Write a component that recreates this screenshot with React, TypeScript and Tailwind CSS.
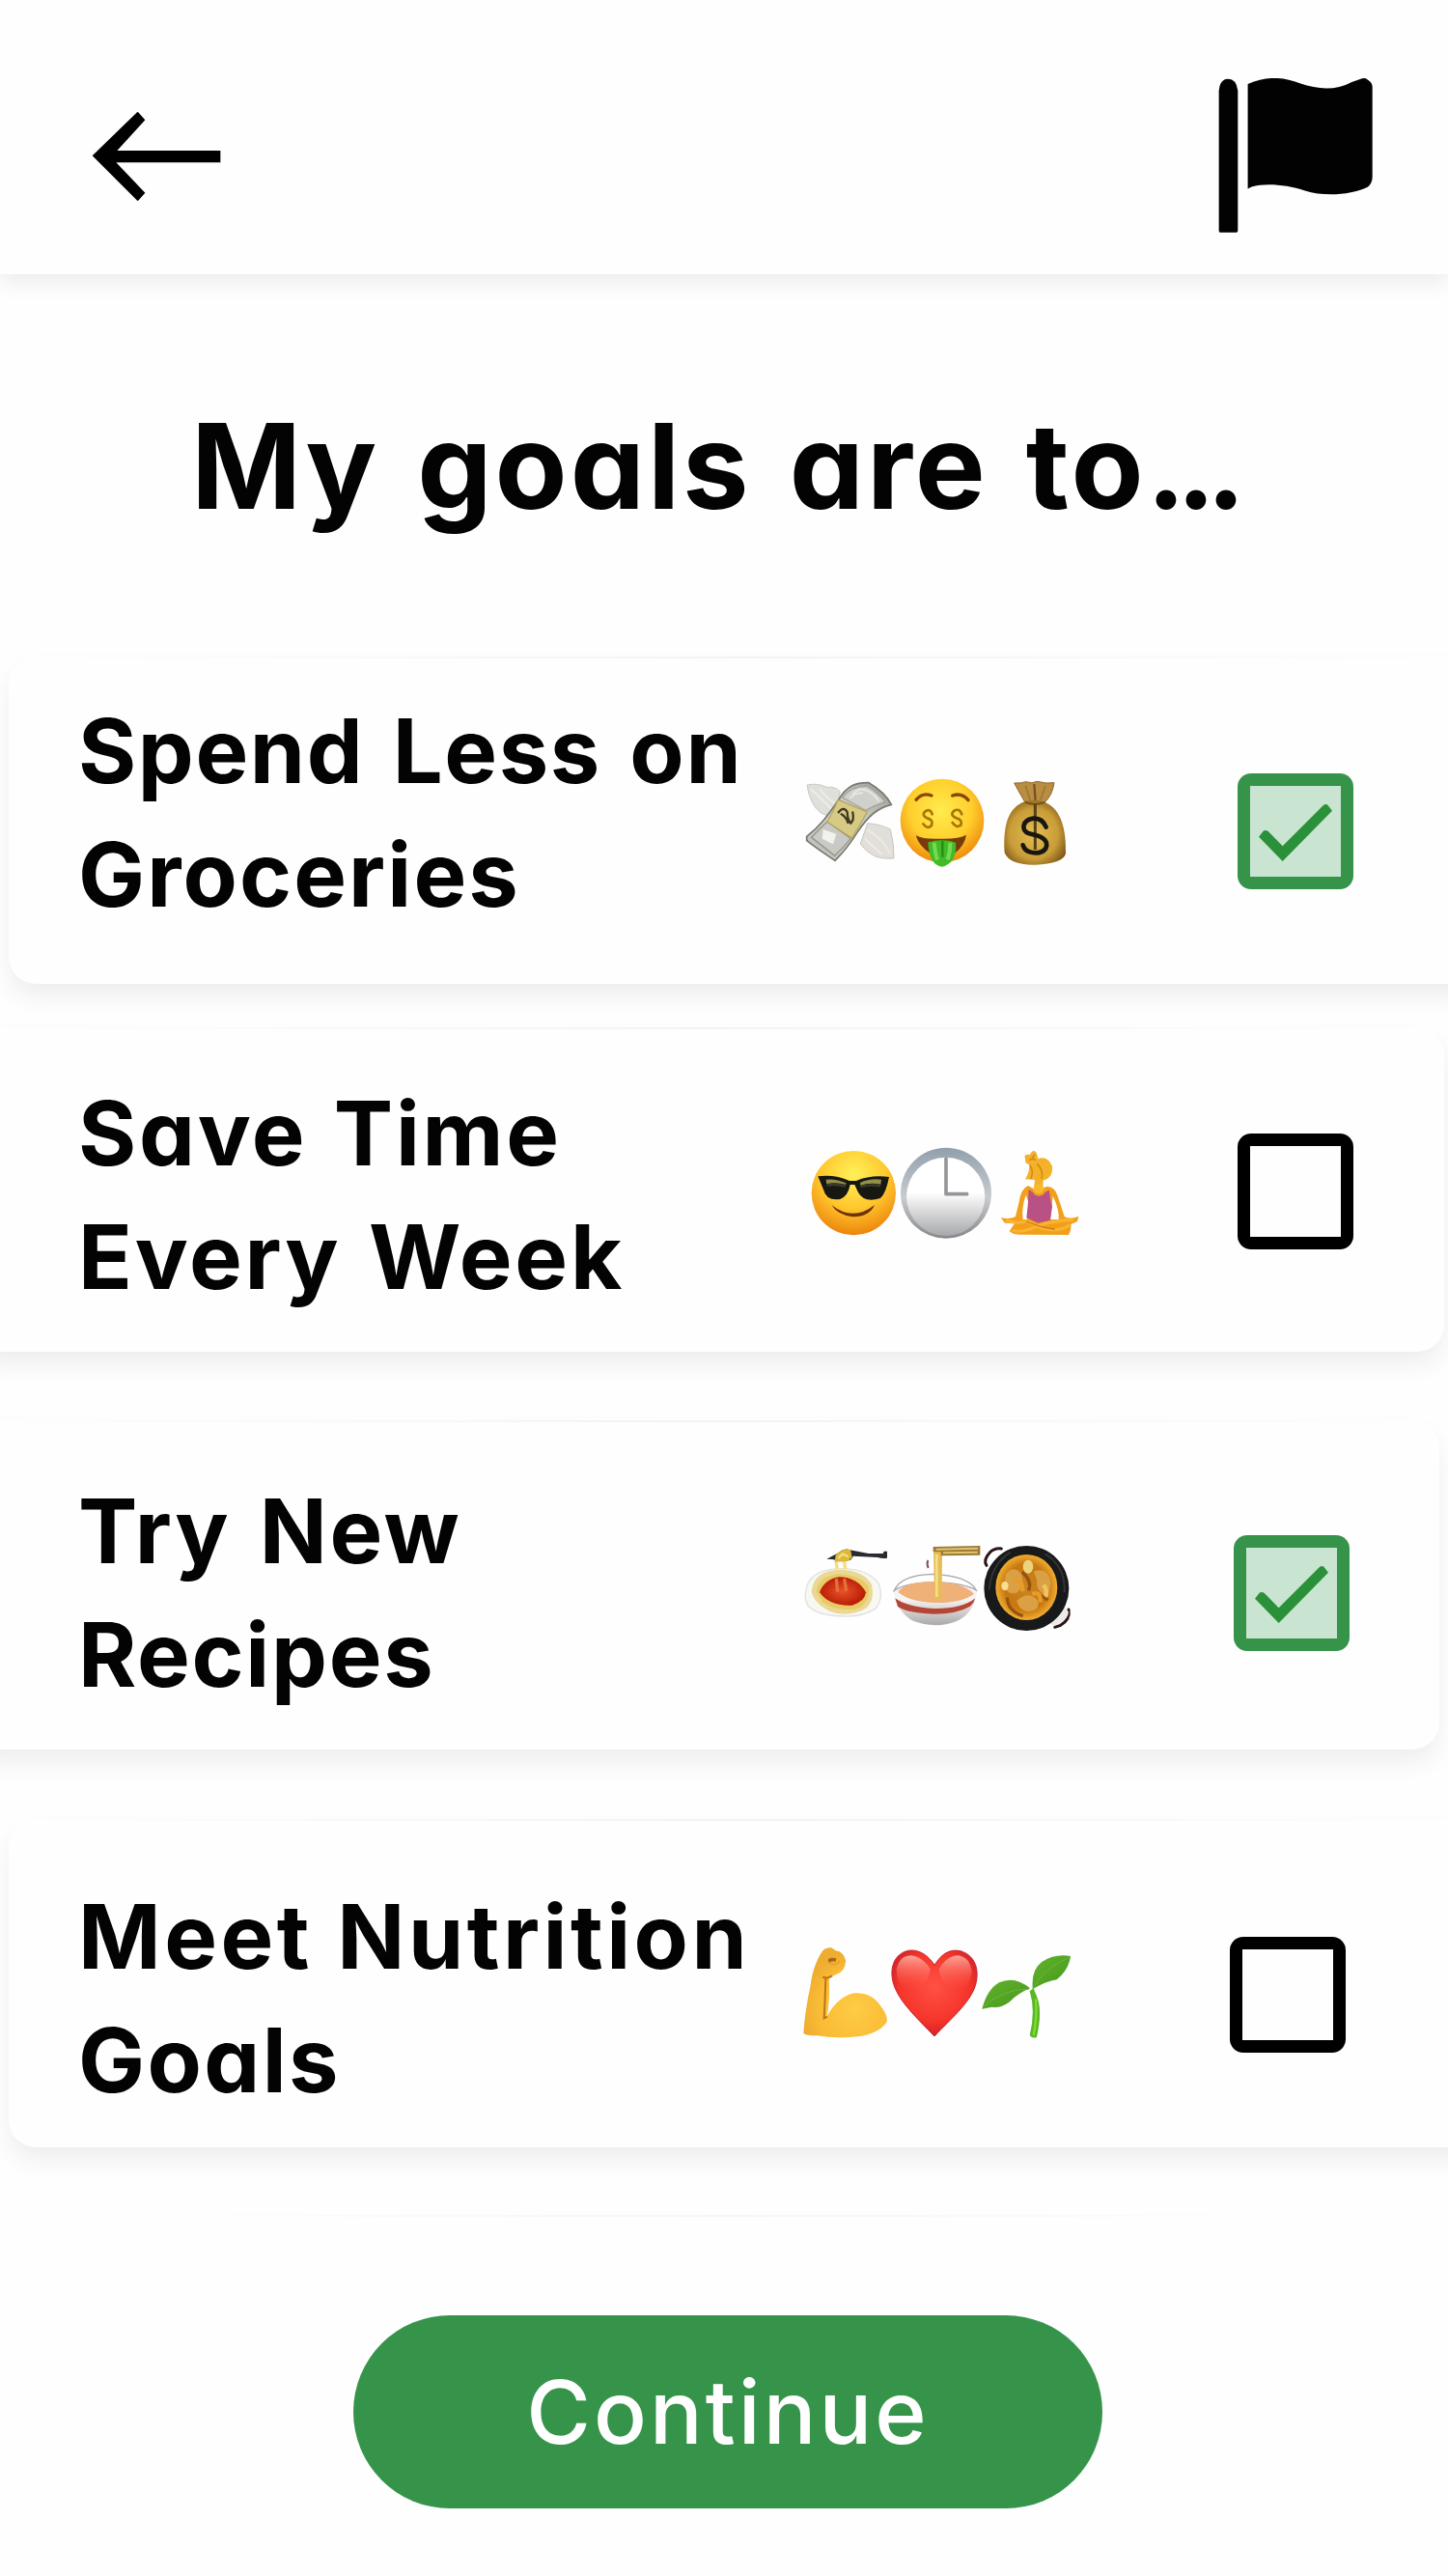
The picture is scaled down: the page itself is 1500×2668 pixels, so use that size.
import { useState, type ReactNode } from 'react'

type Goal = {
  id: string
  lines: { text: string; className: string }[]
  art: ReactNode
  checked: boolean
  card: string
  textClass: string
  artClass: string
  boxClass: string
}

function BackArrow() {
  return (
    <svg viewBox="0 0 402 282" className="h-[94px] w-[134px]" fill="#000">
      <path d="M2 139 L141 4 Q144 2 146 5 L166 28 L79 123 H400 V160 H76 L166 254 L146 277 Q143 281 140 277Z" />
    </svg>
  )
}

function FlagIcon() {
  return (
    <svg viewBox="0 0 484 484" className="h-[161px] w-[161px]" fill="#020202">
      <path d="M2 40 Q5 2 31 2 Q56 2 61 38 V474 Q61 480 56 480 H6 Q2 480 2 475Z" />
      <path d="M92 18 C154-8 202-4 254 16 C315 37 366 38 416 12 L448 1 Q458-2 464 4 Q480 14 480 27 V307 Q480 329 465 339 C414 364 330 369 270 350 C212 330 143 326 104 338 L92 344Z" />
    </svg>
  )
}

function MoneyArt() {
  return (
    <svg viewBox="0 0 930 420" className="h-[140px] w-[310px]">
      <defs>
        <radialGradient id="money-face" cx="48%" cy="38%" r="62%">
          <stop offset="0" stopColor="#ffec4e" />
          <stop offset=".6" stopColor="#ffcf2d" />
          <stop offset="1" stopColor="#ee8b0c" />
        </radialGradient>
        <radialGradient id="sack" cx="48%" cy="52%" r="60%">
          <stop offset="0" stopColor="#e3bd51" />
          <stop offset=".65" stopColor="#c99d38" />
          <stop offset="1" stopColor="#7d5618" />
        </radialGradient>
        <linearGradient id="bill" x1="0" y1="1" x2="1" y2="0">
          <stop offset="0" stopColor="#b7b8b1" />
          <stop offset=".5" stopColor="#d9d9d2" />
          <stop offset="1" stopColor="#94958d" />
        </linearGradient>
      </defs>
      <path d="M48 99 Q80 92 110 106 Q137 103 151 120 L134 193 Q108 197 90 185 Q57 160 48 99Z" fill="#dfe0db" stroke="#c8cac4" strokeWidth="3" />
      <path d="M60 112 Q88 137 130 180 M88 112 Q108 140 138 158" fill="none" stroke="#ecece8" strokeWidth="6" />
      <path d="M236 218 Q276 221 307 237 Q319 282 318 327 Q284 329 263 322 Q232 308 214 282Z" fill="#e2dfda" stroke="#c9c6c0" strokeWidth="3" />
      <path d="M236 239 Q278 260 308 314 M228 266 Q254 289 281 315" fill="none" stroke="#edeae5" strokeWidth="6" />
      <path d="M47 259 C86 229 110 198 147 144 C172 101 201 91 240 92 Q291 122 310 160 C267 171 239 194 205 245 Q175 294 135 334 Q82 299 47 272Z" fill="url(#bill)" stroke="#77786f" strokeWidth="5" />
      <path d="M62 262 Q92 230 111 213 L184 265 Q162 293 134 319Z" fill="#c9cac5" stroke="#92938b" strokeWidth="4" />
      <path d="M98 237 l41 14 l-10 32 l-34-17z" fill="#f2f2ed" />
      <path d="M158 138 Q184 102 235 103 Q270 124 290 151 Q260 161 230 178Z" fill="#d0d1cc" stroke="#a4a59e" strokeWidth="4" />
      <path d="M190 128 Q210 105 232 116 Q262 130 271 150 M181 141 Q196 122 222 124" fill="none" stroke="#e6e6e2" strokeWidth="6" />
      <path d="M145 145 L235 183 Q214 222 187 264 L110 213 Q130 182 145 145Z" fill="#d7ca85" stroke="#b4a65d" strokeWidth="4" />
      <path d="M146 184 Q162 164 173 183 Q174 207 184 218 Q195 209 190 184 M155 190 Q170 199 175 216" fill="none" stroke="#3f3927" strokeWidth="7" strokeLinecap="round" />

      <circle cx="468" cy="210" r="130" fill="url(#money-face)" />
      <path d="M387 145 Q407 121 435 132 M500 132 Q529 122 549 146" fill="none" stroke="#8a4706" strokeWidth="10" strokeLinecap="round" />
      <path d="M437 190 Q430 169 413 183 Q405 195 421 202 Q442 207 435 225 Q422 238 409 220 M529 190 Q522 169 504 180 Q491 193 512 202 Q532 207 526 224 Q512 234 500 216" fill="none" stroke="#a87507" strokeWidth="8" strokeLinecap="round" />
      <path d="M386 256 Q410 269 465 266 Q522 267 543 254 Q538 287 507 311 H430 Q396 289 386 256Z" fill="#773c09" />
      <path d="M424 277 Q470 264 510 278 Q514 329 485 346 Q468 360 449 346 Q427 331 424 277Z" fill="#42bb25" />
      <path d="M443 278 Q447 315 453 332 M493 278 Q493 308 485 331" fill="none" stroke="#74d957" strokeWidth="12" />
      <path d="M469 272 V323" stroke="#238b19" strokeWidth="7" />

      <path d="M692 93 Q715 94 728 89 Q747 96 764 88 Q789 96 816 92 Q811 129 787 153 Q756 160 724 150 Q706 119 692 93Z" fill="#b98d42" stroke="#8d6529" strokeWidth="3" />
      <path d="M754 96 L758 151" stroke="#795421" strokeWidth="7" />
      <path d="M727 101 L742 148 M789 102 L773 148" stroke="#a27a38" strokeWidth="6" />
      <path d="M724 151 Q757 140 787 153 C843 174 854 250 852 313 Q842 344 757 347 Q679 349 662 310 C657 224 673 170 724 151Z" fill="url(#sack)" />
      <path d="M725 152 Q755 165 787 152" fill="none" stroke="#6f4b17" strokeWidth="5" />
      <path d="M757 157 V300" stroke="#564018" strokeWidth="9" />
      <path d="M791 230 Q779 201 751 203 C720 207 709 239 738 250 C775 258 802 269 790 296 C776 317 727 315 719 286" fill="none" stroke="#171611" strokeWidth="14" strokeLinecap="round" />
    </svg>
  )
}

function TimeArt() {
  return (
    <svg viewBox="0 0 930 420" className="h-[140px] w-[310px]">
      <defs>
        <radialGradient id="cool-face" cx="50%" cy="28%" r="73%">
          <stop offset="0" stopColor="#fff158" />
          <stop offset=".55" stopColor="#ffc72d" />
          <stop offset="1" stopColor="#ec820c" />
        </radialGradient>
        <linearGradient id="clock-rim" x2="0" y2="1">
          <stop offset="0" stopColor="#91a0ad" />
          <stop offset=".55" stopColor="#c9cbcf" />
          <stop offset="1" stopColor="#85888b" />
        </linearGradient>
        <linearGradient id="clock-face" x2="0" y2="1">
          <stop offset=".45" stopColor="#fff" />
          <stop offset="1" stopColor="#a7a8aa" />
        </linearGradient>
      </defs>
      <circle cx="193" cy="197" r="131" fill="url(#cool-face)" />
      <path d="M82 145 Q136 139 180 159 H201 Q246 140 303 147 Q293 199 276 213 Q226 229 207 195 L196 171 H182 Q176 206 151 216 Q107 222 99 186Z" fill="#171812" />
      <path d="M107 155 Q137 151 169 166 V171 Q137 162 109 169Z M213 165 Q242 151 279 155 L277 170 Q240 163 214 174Z" fill="#91904b" />
      <path d="M109 173 Q139 167 167 176 M214 177 Q247 169 276 175" fill="none" stroke="#373b2a" strokeWidth="8" />
      <path d="M124 234 Q191 287 258 234 Q243 270 191 271 Q144 266 124 234Z" fill="#6d3105" />

      <circle cx="480" cy="197" r="141" fill="url(#clock-rim)" />
      <circle cx="479" cy="208" r="122" fill="url(#clock-face)" />
      <path d="M480 90 V200 H545" fill="none" stroke="#96969a" strokeWidth="11" strokeLinecap="round" strokeLinejoin="round" />

      <path d="M726 91 Q720 75 740 78 Q751 58 761 72 L766 90 Q797 80 810 114 Q813 150 782 158 L781 181 H753 L756 156 L726 154 Q742 128 738 108 Q725 108 726 91Z" fill="#f4b22b" />
      <path d="M739 96 Q748 86 758 95 M741 111 Q754 130 743 153 M763 106 Q784 128 777 153 M758 78 Q748 82 749 92" fill="none" stroke="#d88b13" strokeWidth="5" />
      <path d="M735 174 Q712 183 706 228 L696 270 Q677 280 650 273 L663 290 L693 292 L677 315 Q690 329 724 326 L861 327 Q870 312 868 294 L888 285 L892 269 Q865 280 848 270 L827 206 Q818 175 791 177 L766 191Z" fill="#f2a01c" />
      <path d="M728 203 Q714 245 719 279 H732 L736 224Z M812 206 Q833 250 830 279 H804Z" fill="#fff" />
      <path d="M737 187 Q749 190 754 201 Q768 211 783 201 Q790 190 801 189 Q802 213 810 239 L804 281 L767 290 L730 274 L734 238Z" fill="#b95184" />
      <ellipse cx="768" cy="184" rx="16" ry="15" fill="#f9b92e" />
      <path d="M666 282 Q705 294 729 284 L778 307 Q835 319 864 296 M876 280 Q807 283 765 300 Q720 320 686 314" fill="none" stroke="#f9b430" strokeWidth="9" />
      <path d="M729 285 Q778 306 818 309" fill="none" stroke="#ce7411" strokeWidth="4" />
    </svg>
  )
}

function RecipeArt() {
  return (
    <svg viewBox="0 0 930 420" className="h-[140px] w-[310px]">
      <defs>
        <radialGradient id="sauce">
          <stop offset="0" stopColor="#e7532a" />
          <stop offset="1" stopColor="#b91d04" />
        </radialGradient>
        <linearGradient id="soup-bowl" x2="0" y2="1">
          <stop offset=".5" stopColor="#f6f4f2" />
          <stop offset="1" stopColor="#aaa8a8" />
        </linearGradient>
        <radialGradient id="stew">
          <stop offset="0" stopColor="#c98522" />
          <stop offset=".7" stopColor="#c77710" />
          <stop offset="1" stopColor="#f1ad31" />
        </radialGradient>
      </defs>
      <path d="M45 200 Q54 139 145 134 Q237 132 271 181 Q287 225 263 257 Q222 284 166 282 Q83 282 51 250 Q38 224 45 200Z" fill="#f8f8f3" stroke="#dfe2e0" strokeWidth="4" />
      <path d="M62 205 Q67 142 145 137 Q224 137 249 184 Q261 245 219 264 Q164 285 118 266 Q69 242 62 205Z" fill="#ead995" />
      <path d="M77 206 Q80 160 145 151 Q215 154 239 190 Q244 237 208 257 Q144 270 97 239Z" fill="#e8ca66" />
      <path d="M87 207 Q104 166 147 160 Q206 161 231 208 Q227 237 188 248 Q116 251 87 207Z" fill="url(#sauce)" />
      <path d="M138 111 L142 136 M163 106 L167 136" fill="none" stroke="#f5dd83" strokeWidth="10" />
      <path d="M139 165 L143 206 M164 165 L170 203" fill="none" stroke="#e3713c" strokeWidth="10" />
      <path d="M109 104 L147 84 Q163 69 181 76 L239 87 L284 87 L287 80 H297 V101 Q280 103 268 99 L192 95 L183 107 L159 112 L126 105Z" fill="#292b31" />
      <path d="M137 91 L160 75 L183 74 L188 98 L176 111 L134 113Z" fill="#ddb73a" />
      <path d="M145 102 L159 88 L176 97" fill="none" stroke="#f5df84" strokeWidth="7" />

      <path d="M424 108 Q419 119 425 132" fill="none" stroke="#815457" strokeWidth="6" />
      <path d="M317 202 Q326 161 429 149 Q559 154 576 203 Q573 267 512 298 Q444 323 374 295 Q322 262 317 202Z" fill="url(#soup-bowl)" />
      <path d="M319 202 Q340 153 440 151 Q551 157 574 201 Q540 180 448 176 Q354 178 319 202Z" fill="#fff" stroke="#aaa4ac" strokeWidth="4" />
      <path d="M331 207 Q348 176 443 174 Q531 176 567 212 Q532 240 449 240 Q368 238 331 207Z" fill="#efb178" />
      <path d="M322 226 Q360 254 443 258 Q531 259 571 226 Q567 240 555 251 Q514 275 441 275 Q359 272 330 252Z" fill="#b54536" />
      <path d="M441 78 H468 L467 224 Q455 236 444 224Z" fill="#e6bd57" />
      <path d="M451 90 V222" stroke="#f6dd89" strokeWidth="8" />
      <path d="M440 66 L586 63 V92 L464 94 V82 H440Z" fill="#9e7833" />
      <path d="M449 74 L579 71 M471 85 L578 83" stroke="#ddc573" strokeWidth="6" />

      <path d="M606 124 Q594 108 616 84 Q631 69 652 72 M861 261 Q867 291 836 310 L818 316" fill="none" stroke="#29151a" strokeWidth="9" strokeLinecap="round" />
      <path d="M844 246 L861 269 Q857 299 813 310 L799 302Z" fill="#edebe7" />
      <ellipse cx="730" cy="195" rx="132" ry="132" fill="#18191a" />
      <path d="M614 200 Q621 120 680 83 M788 88 Q852 128 848 207" fill="none" stroke="#333332" strokeWidth="6" />
      <ellipse cx="730" cy="192" rx="96" ry="102" fill="url(#stew)" />
      <path d="M666 151 Q690 121 714 150 Q726 186 702 208 Q667 221 661 178Z M752 143 Q796 126 805 177 Q806 210 782 214 Q757 195 763 170Z M700 234 Q735 201 764 232 Q776 264 736 267 Q708 267 700 234Z" fill="#dba043" />
      <path d="M670 224 Q672 266 719 281 M717 144 Q750 176 736 202 M773 217 L797 231" fill="none" stroke="#96540f" strokeWidth="10" />
      <path d="M691 172 Q718 160 718 205 M748 213 Q775 202 773 239" fill="none" stroke="#e79c2a" strokeWidth="13" />
      <ellipse cx="735" cy="128" rx="16" ry="21" fill="#eed37e" />
      <ellipse cx="663" cy="188" rx="11" ry="14" fill="#f7de94" />
      <path d="M783 184 Q799 207 788 221" fill="none" stroke="#efc35d" strokeWidth="14" />
    </svg>
  )
}

function NutritionArt() {
  return (
    <svg viewBox="0 0 930 420" className="h-[140px] w-[310px]">
      <defs>
        <radialGradient id="muscle" cx="62%" cy="68%" r="65%">
          <stop offset="0" stopColor="#ffcb45" />
          <stop offset=".7" stopColor="#f9bb35" />
          <stop offset="1" stopColor="#eeac30" />
        </radialGradient>
        <radialGradient id="heart" cx="50%" cy="42%" r="62%">
          <stop offset="0" stopColor="#ff5145" />
          <stop offset=".65" stopColor="#f6352b" />
          <stop offset="1" stopColor="#c71d28" />
        </radialGradient>
        <linearGradient id="heart-shine" x2="0" y2="1">
          <stop offset="0" stopColor="#ffc0b3" stopOpacity=".8" />
          <stop offset="1" stopColor="#ff594b" stopOpacity="0" />
        </linearGradient>
        <linearGradient id="leaf" x2="1" y2="1">
          <stop offset="0" stopColor="#64b330" />
          <stop offset="1" stopColor="#449718" />
        </linearGradient>
      </defs>
      <path d="M37 317 Q42 245 58 174 Q65 113 91 70 Q102 48 124 52 L137 61 Q163 65 168 91 Q169 123 139 135 L117 145 Q119 224 110 265 Q144 203 195 193 Q248 190 276 232 Q302 265 295 284 Q271 318 207 328 Q134 335 80 325 Q43 325 37 317Z" fill="url(#muscle)" />
      <path d="M97 142 Q109 151 126 139 M106 149 Q104 214 101 271 L111 266" fill="none" stroke="#bd741c" strokeWidth="6" />
      <path d="M113 89 Q119 80 139 85 L137 95 Q125 91 117 100Z" fill="#a86619" />
      <path d="M116 100 Q138 110 150 92" fill="none" stroke="#e7a52c" strokeWidth="5" />

      <path d="M444 106 C421 68 384 53 355 63 C312 78 302 129 321 176 C343 229 395 275 444 327 C493 274 553 225 571 170 C587 114 566 74 525 62 C489 54 464 74 444 106Z" fill="url(#heart)" stroke="#c72531" strokeWidth="3" />
      <path d="M326 119 Q335 77 370 76 Q407 79 432 119 Q417 184 371 183 Q327 174 326 119Z M458 119 Q481 76 519 76 Q556 84 560 126 Q554 179 512 183 Q466 174 458 119Z" fill="url(#heart-shine)" />

      <path d="M592 242 Q608 181 645 160 Q694 138 741 178 Q704 193 676 221 Q648 241 623 236Z" fill="url(#leaf)" />
      <path d="M749 174 Q745 119 779 95 Q819 69 867 78 Q862 120 824 151 Q791 156 749 181Z" fill="url(#leaf)" />
      <path d="M593 239 Q653 180 738 180 M751 176 Q786 114 862 82" fill="none" stroke="#6cb53a" strokeWidth="3" />
      <path d="M740 187 Q759 247 740 325 Q751 336 762 329 Q779 254 765 211 L752 178Z" fill="#58b924" />
      <path d="M759 211 Q764 267 752 324" fill="none" stroke="#8bdb35" strokeWidth="6" />
    </svg>
  )
}

const goals: Goal[] = [
  {
    id: 'spend',
    lines: [
      { text: 'Spend Less on', className: 'tracking-[1.6px] [word-spacing:6px]' },
      { text: 'Groceries', className: 'tracking-[2.1px]' },
    ],
    art: <MoneyArt />,
    checked: true,
    card: 'mt-[397px] ml-[9px] -mr-8 h-[339px] rounded-[28px]',
    textClass: 'pl-[72px] mt-[34px] w-[811px]',
    artClass: 'mt-[100px]',
    boxClass: 'mt-[121px] ml-[152px]',
  },
  {
    id: 'time',
    lines: [
      { text: 'Save Time', className: 'tracking-[2.7px] [word-spacing:3px]' },
      { text: 'Every Week', className: 'tracking-[2.8px] [word-spacing:4px]' },
    ],
    art: <TimeArt />,
    checked: false,
    card: 'mt-[45px] -ml-8 mr-[4px] h-[336px] rounded-[28px]',
    textClass: 'pl-[113px] mt-[46px] w-[852px]',
    artClass: 'mt-[106px]',
    boxClass: 'mt-[110px] ml-[152px]',
  },
  {
    id: 'recipes',
    lines: [
      { text: 'Try New', className: 'tracking-[2.6px] [word-spacing:5px]' },
      { text: 'Recipes', className: 'tracking-[1.7px]' },
    ],
    art: <RecipeArt />,
    checked: true,
    card: 'mt-[71px] -ml-8 mr-[9px] h-[341px] rounded-[28px]',
    textClass: 'pl-[113px] mt-[51px] w-[852px]',
    artClass: 'mt-[109px]',
    boxClass: 'mt-[119px] ml-[148px]',
  },
  {
    id: 'nutrition',
    lines: [
      { text: 'Meet Nutrition', className: 'tracking-[3.5px]' },
      { text: 'Goals', className: 'tracking-[2.4px]' },
    ],
    art: <NutritionArt />,
    checked: false,
    card: 'mt-[72px] ml-[9px] -mr-8 h-[340px] rounded-[28px]',
    textClass: 'pl-[72px] mt-[58px] w-[811px]',
    artClass: 'mt-[116px]',
    boxClass: 'mt-[122px] ml-[144px]',
  },
]

function Checkbox({ checked, onToggle, label, className }: { checked: boolean; onToggle: () => void; label: string; className: string }) {
  return (
    <button
      role="checkbox"
      aria-checked={checked}
      aria-label={label}
      onClick={onToggle}
      className={`flex h-[120px] w-[120px] shrink-0 items-center justify-center rounded-[14px] ${checked ? 'bg-[#36944a]' : 'bg-black'} ${className}`}
    >
      <span className={`flex h-[94px] w-[94px] items-center justify-center ${checked ? 'bg-[#c9e4d0]' : 'bg-[#fefefe]'}`}>
        {checked && (
          <svg viewBox="0 0 282 282" className="h-[94px] w-[94px]">
            <path d="M27 158 L41 140 Q49 135 57 142 L101 187 L227 61 Q238 52 244 63 L255 77 L101 234Z" fill="#2a9039" />
          </svg>
        )}
      </span>
    </button>
  )
}

export default function App() {
  const [checked, setChecked] = useState<Record<string, boolean>>(() =>
    Object.fromEntries(goals.map((g) => [g.id, g.checked])),
  )
  const toggle = (id: string) => setChecked((c) => ({ ...c, [id]: !c[id] }))

  return (
    <div className="flex h-[2668px] w-[1500px] flex-col overflow-hidden bg-[#fefefe] font-['Inter',sans-serif] text-[#030303] [font-feature-settings:'cv11']">
      <header className="flex h-[284px] shrink-0 items-start justify-between bg-[#fefefe] pt-[81px] pr-[77px] pl-[95px] shadow-[0_8px_20px_rgba(60,70,70,0.10)]">
        <button aria-label="Back" className="mt-[34px]">
          <BackArrow />
        </button>
        <button aria-label="Flag">
          <FlagIcon />
        </button>
      </header>
      <main className="-mt-px flex flex-col">
        <h1 className="-mb-[397px] h-[397px] pt-[126px] pl-[198px] text-[122.5px] leading-[148px] font-[680] tracking-[3px] whitespace-nowrap [word-spacing:7px]">
          My goals are to<span className="tracking-[-10px]">...</span>
        </h1>
        {goals.map((g) => (
          <section key={g.id} className={`relative flex shrink-0 items-start bg-[#fefefe] shadow-[0_14px_24px_-2px_rgba(60,70,70,0.09)] ${g.card}`}>
            <span className="absolute inset-x-0 top-0 h-[2px] bg-linear-to-r from-transparent via-[#f3f3f3] to-transparent" />
            <h2 className={`shrink-0 text-[92px] leading-[128px] font-[680] whitespace-nowrap ${g.textClass}`}>
              {g.lines.map((l) => (
                <span key={l.text} className={`block ${l.className}`}>{l.text}</span>
              ))}
            </h2>
            <div className={`shrink-0 ${g.artClass}`}>{g.art}</div>
            <Checkbox checked={checked[g.id]} onToggle={() => toggle(g.id)} label={g.lines.map((l) => l.text).join(' ')} className={g.boxClass} />
          </section>
        ))}
      </main>
      <footer className="flex shrink-0 flex-col items-center pt-[70px]">
        <span className="h-[2px] w-[1340px] bg-linear-to-r from-transparent via-[#f6f6f6] to-transparent" />
        <button className="mt-[102px] ml-[8px] h-[200px] w-[776px] rounded-[100px] bg-[#36944a] text-[91px] leading-[200px] font-medium tracking-[3px] text-white">
          Continue
        </button>
      </footer>
    </div>
  )
}
